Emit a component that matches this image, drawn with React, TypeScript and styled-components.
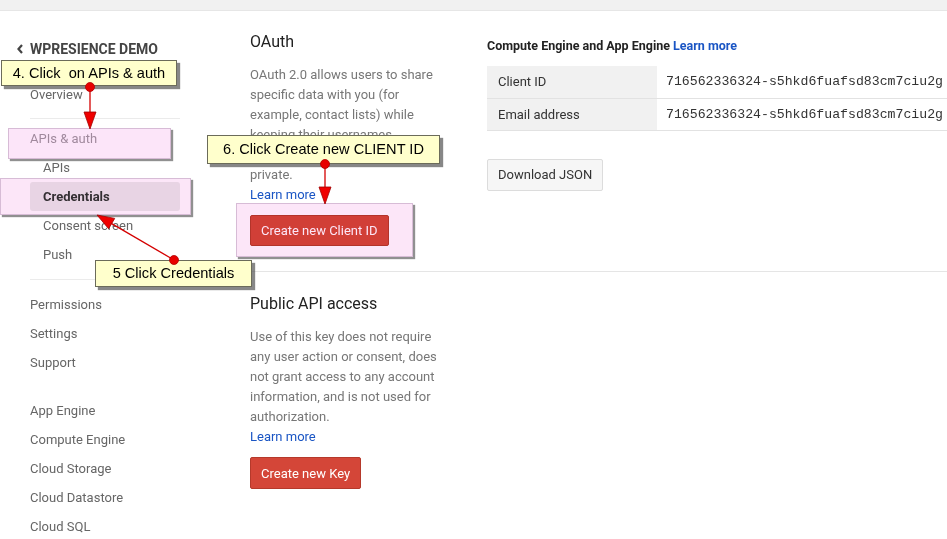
import React from "react";
import styled, { createGlobalStyle } from "styled-components";

const GlobalStyle = createGlobalStyle`
  html, body { margin: 0; padding: 0; background: #fff; }
  * { box-sizing: border-box; }
`;

const Page = styled.div`
  position: relative;
  width: 947px;
  height: 539px;
  overflow: hidden;
  background: #fff;
  font-family: Roboto, "Liberation Sans", Arial, sans-serif;
`;

const TopBar = styled.div`
  height: 11px;
  background: #f1f1f1;
  border-bottom: 1px solid #e6e6e6;
`;

const Body = styled.div`
  display: flex;
`;

const Sidebar = styled.nav`
  flex: none;
  width: 230px;
  padding: 28px 50px 0 30px;
`;

const SidebarTitle = styled.div`
  display: flex;
  align-items: center;
  gap: 7px;
  margin-left: -13px;
  height: 20px;
  margin-bottom: 21px;
  font-size: 14px;
  font-weight: 700;
  color: #444;
  text-transform: uppercase;
  white-space: nowrap;
`;

const NavItem = styled.div<{ $sub?: boolean; $active?: boolean }>`
  height: 29px;
  line-height: 29px;
  padding-left: ${(p) => (p.$sub ? "13px" : "0")};
  font-size: 13px;
  color: ${(p) => (p.$active ? "#333" : "#666")};
  font-weight: ${(p) => (p.$active ? 700 : 400)};
  background: ${(p) => (p.$active ? "#ebebeb" : "transparent")};
  border-radius: 3px;
  white-space: nowrap;
`;

const NavDivider = styled.div<{ $top: number; $bottom: number }>`
  height: 1px;
  background: #ebebeb;
  margin: ${(p) => p.$top}px 0 ${(p) => p.$bottom}px;
`;

const NavGap = styled.div`
  height: 19px;
`;

const Main = styled.main`
  flex: 1;
  min-width: 0;
  display: flex;
  flex-direction: column;
`;

const TopSection = styled.section`
  display: flex;
  gap: 42px;
  padding: 21px 0 25px 20px;
  border-bottom: 1px solid #e5e5e5;
`;

const BottomSection = styled.section`
  padding: 22px 0 0 20px;
`;

const TextCol = styled.div`
  flex: none;
  width: 195px;
`;

const Heading = styled.h2`
  margin: 0 0 13px;
  font-size: 16px;
  line-height: 20px;
  font-weight: 400;
  color: #222;
`;

const Para = styled.p`
  margin: 0;
  font-size: 13px;
  line-height: 20px;
  color: #777;
`;

const BlockLink = styled.a`
  display: block;
  font-size: 13px;
  line-height: 20px;
  color: #1a55c4;
  text-decoration: none;
`;

const RedButton = styled.button<{ $h: number }>`
  display: block;
  margin-top: 10px;
  height: ${(p) => p.$h}px;
  padding: 0 10px;
  background: #d44638;
  border: 1px solid #b5392b;
  border-radius: 2px;
  color: #fff;
  font-family: Roboto, "Liberation Sans", Arial, sans-serif;
  font-size: 13px;
`;

const RightCol = styled.div`
  flex: 1;
  min-width: 0;
`;

const Caption = styled.div`
  margin: 6px 0 12px;
  font-size: 12.5px;
  line-height: 16px;
  font-weight: 700;
  color: #222;
  white-space: nowrap;
  span { color: #1a55c4; }
`;

const InfoTable = styled.table`
  border-collapse: collapse;
  width: 460px;
  table-layout: fixed;
`;

const Row = styled.tr`
  height: 32px;
  border-bottom: 1px solid #e2e2e2;
`;

const Label = styled.td`
  width: 170px;
  padding: 0 11px;
  background: #f1f1f1;
  font-size: 13px;
  color: #333;
`;

const Value = styled.td`
  padding: 0 9px;
  font-family: "Liberation Mono", "Courier New", monospace;
  font-size: 13.2px;
  color: #333;
  white-space: nowrap;
  overflow: visible;
`;

const GreyButton = styled.button`
  display: block;
  margin-top: 28px;
  height: 32px;
  padding: 0 10px;
  background: #f6f6f6;
  border: 1px solid #dcdcdc;
  border-radius: 2px;
  color: #333;
  font-family: Roboto, "Liberation Sans", Arial, sans-serif;
  font-size: 13px;
`;

/* ---------- annotation overlays (lie over the page) ---------- */

const Note = styled.div<{ $x: number; $y: number; $w: number; $h: number }>`
  position: absolute;
  left: ${(p) => p.$x}px;
  top: ${(p) => p.$y}px;
  width: ${(p) => p.$w}px;
  height: ${(p) => p.$h}px;
  background: #ffffcc;
  border: 1px solid #6b6b5a;
  box-shadow: 3px 3px 1px rgba(70, 70, 70, 0.65);
  font-family: "Liberation Sans", Arial, sans-serif;
  font-size: 14.6px;
  line-height: ${(p) => p.$h - 2}px;
  text-align: center;
  color: #000;
  white-space: nowrap;
`;

const Highlight = styled.div<{ $x: number; $y: number; $w: number; $h: number; $soft?: boolean }>`
  position: absolute;
  left: ${(p) => p.$x}px;
  top: ${(p) => p.$y}px;
  width: ${(p) => p.$w}px;
  height: ${(p) => p.$h}px;
  background: ${(p) => (p.$soft ? "rgba(248, 190, 240, 0.4)" : "#fce6f8")};
  mix-blend-mode: ${(p) => (p.$soft ? "normal" : "multiply")};
  border: 1px solid rgba(200, 170, 200, 0.7);
  box-shadow: 2px 2px 1px rgba(70, 70, 70, 0.6);
`;

const ArrowLayer = styled.svg`
  position: absolute;
  left: 0;
  top: 0;
  pointer-events: none;
`;

const Chevron = () => (
  <svg width="6" height="10" viewBox="0 0 6 10">
    <polyline points="5,1 1.5,5 5,9" fill="none" stroke="#444" strokeWidth="2.2" />
  </svg>
);

const Arrow = ({ x1, y1, x2, y2 }: { x1: number; y1: number; x2: number; y2: number }) => {
  const dx = x2 - x1;
  const dy = y2 - y1;
  const len = Math.hypot(dx, dy);
  const ux = dx / len;
  const uy = dy / len;
  const hl = 17;
  const hw = 6;
  const bx = x2 - ux * hl;
  const by = y2 - uy * hl;
  const px = -uy * hw;
  const py = ux * hw;
  return (
    <g>
      <line x1={x1} y1={y1} x2={bx} y2={by} stroke="#d40000" strokeWidth="1.3" />
      <polygon
        points={`${x2},${y2} ${bx + px},${by + py} ${bx - px},${by - py}`}
        fill="#f00000"
        stroke="#a00000"
        strokeWidth="0.8"
      />
      <circle cx={x1} cy={y1} r="4.5" fill="#e80000" stroke="#b00000" strokeWidth="0.8" />
    </g>
  );
};

const clientId = "716562336324-s5hkd6fuafsd83cm7ciu2g";

export default function App() {
  return (
    <Page>
      <GlobalStyle />
      <TopBar />
      <Body>
        <Sidebar>
          <SidebarTitle>
            <Chevron />
            WPRESIENCE DEMO
          </SidebarTitle>
          <NavItem>Overview</NavItem>
          <NavDivider $top={9} $bottom={5} />
          <NavItem>APIs &amp; auth</NavItem>
          <NavItem $sub>APIs</NavItem>
          <NavItem $sub $active>Credentials</NavItem>
          <NavItem $sub>Consent screen</NavItem>
          <NavItem $sub>Push</NavItem>
          <NavDivider $top={10} $bottom={10} />
          <NavItem>Permissions</NavItem>
          <NavItem>Settings</NavItem>
          <NavItem>Support</NavItem>
          <NavGap />
          <NavItem>App Engine</NavItem>
          <NavItem>Compute Engine</NavItem>
          <NavItem>Cloud Storage</NavItem>
          <NavItem>Cloud Datastore</NavItem>
          <NavItem>Cloud SQL</NavItem>
        </Sidebar>
        <Main>
          <TopSection>
            <TextCol>
              <Heading>OAuth</Heading>
              <Para>
                OAuth 2.0 allows users to share specific data with you (for example, contact lists) while
                keeping their usernames, passwords, and other info private.
              </Para>
              <BlockLink href="#">Learn more</BlockLink>
              <RedButton $h={31}>Create new Client ID</RedButton>
            </TextCol>
            <RightCol>
              <Caption>
                Compute Engine and App Engine <span>Learn more</span>
              </Caption>
              <InfoTable>
                <tbody>
                  <Row>
                    <Label>Client ID</Label>
                    <Value>{clientId}</Value>
                  </Row>
                  <Row>
                    <Label>Email address</Label>
                    <Value>{clientId}</Value>
                  </Row>
                </tbody>
              </InfoTable>
              <GreyButton>Download JSON</GreyButton>
            </RightCol>
          </TopSection>
          <BottomSection>
            <TextCol>
              <Heading>Public API access</Heading>
              <Para>
                Use of this key does not require any user action or consent, does not grant access to any
                account information, and is not used for authorization.
              </Para>
              <BlockLink href="#">Learn more</BlockLink>
              <RedButton $h={32}>Create new Key</RedButton>
            </TextCol>
          </BottomSection>
        </Main>
      </Body>

      <Highlight $soft $x={8} $y={128} $w={163} $h={31} />
      <Highlight $x={0} $y={178} $w={191} $h={37} />
      <Highlight $x={236} $y={203} $w={177} $h={54} />

      <Note $x={1} $y={60} $w={176} $h={26}>
        4. Click&nbsp; on APIs &amp; auth
      </Note>
      <Note $x={207} $y={135} $w={233} $h={29}>
        6. Click Create new CLIENT ID
      </Note>
      <Note $x={95} $y={260} $w={157} $h={27}>
        5 Click Credentials
      </Note>

      <ArrowLayer width="947" height="539" viewBox="0 0 947 539">
        <Arrow x1={90} y1={87} x2={90} y2={129} />
        <Arrow x1={325} y1={164} x2={325} y2={204} />
        <Arrow x1={174} y1={260} x2={97} y2={215} />
      </ArrowLayer>
    </Page>
  );
}
